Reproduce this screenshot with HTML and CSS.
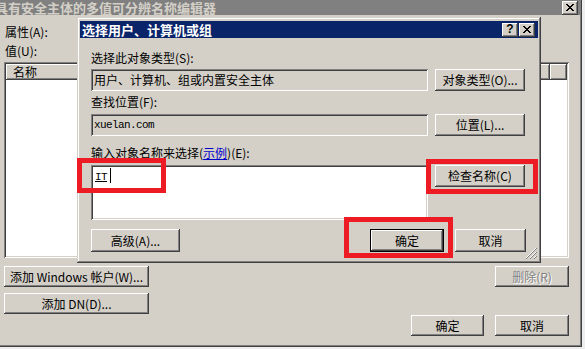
FILE: index.html
```html
<!DOCTYPE html>
<html lang="zh-CN">
<head>
    <meta charset="UTF-8">
    <title>选择用户、计算机或组</title>
    <link rel="stylesheet" href="styles.css">
</head>
<body>
    <div class="stage">

        <!-- the editor window behind -->
        <div class="outer">
            <div class="caption caption-off">
                <span class="caption-text">具有安全主体的多值可分辨名称编辑器</span>
                <span class="cap-btn">
                    <svg width="8" height="7" viewBox="0 0 8 7" shape-rendering="crispEdges"><g fill="#000"><rect x="0" y="0" width="2" height="1"/><rect x="6" y="0" width="2" height="1"/><rect x="1" y="1" width="2" height="1"/><rect x="5" y="1" width="2" height="1"/><rect x="2" y="2" width="4" height="1"/><rect x="3" y="3" width="2" height="1"/><rect x="2" y="4" width="4" height="1"/><rect x="1" y="5" width="2" height="1"/><rect x="5" y="5" width="2" height="1"/><rect x="0" y="6" width="2" height="1"/><rect x="6" y="6" width="2" height="1"/></g></svg>
                </span>
            </div>
            <div class="outer-body">
                <div class="label label-attr">属性(A):</div>
                <div class="label label-value">值(U):</div>
                <div class="list field">
                    <div class="list-head">
                        <div class="head-cell">名称</div>
                        <div class="head-cell head-fill"></div>
                    </div>
                </div>
                <div class="outer-foot">
                    <div class="foot-left">
                        <button class="btn btn-wide">添加 Windows 帐户(W)...</button>
                        <button class="btn btn-wide">添加 DN(D)...</button>
                    </div>
                    <div class="foot-right">
                        <button class="btn btn-remove" disabled>删除(R)</button>
                        <div class="foot-ok">
                            <button class="btn btn-ok">确定</button>
                            <button class="btn btn-cancel">取消</button>
                        </div>
                    </div>
                </div>
            </div>
        </div>

        <!-- picker dialog on top -->
        <div class="dialog">
            <div class="caption caption-on">
                <span class="caption-text">选择用户、计算机或组</span>
                <span class="cap-btns">
                    <span class="cap-btn cap-help">?</span>
                    <span class="cap-btn">
                        <svg width="8" height="7" viewBox="0 0 8 7" shape-rendering="crispEdges"><g fill="#000"><rect x="0" y="0" width="2" height="1"/><rect x="6" y="0" width="2" height="1"/><rect x="1" y="1" width="2" height="1"/><rect x="5" y="1" width="2" height="1"/><rect x="2" y="2" width="4" height="1"/><rect x="3" y="3" width="2" height="1"/><rect x="2" y="4" width="4" height="1"/><rect x="1" y="5" width="2" height="1"/><rect x="5" y="5" width="2" height="1"/><rect x="0" y="6" width="2" height="1"/><rect x="6" y="6" width="2" height="1"/></g></svg>
                    </span>
                </span>
            </div>
            <div class="dialog-body">
                <div class="label label-type">选择此对象类型(S):</div>
                <div class="row row-type">
                    <div class="field box readonly">用户、计算机、组或内置安全主体</div>
                    <button class="btn btn-side">对象类型(O)...</button>
                </div>
                <div class="label label-where">查找位置(F):</div>
                <div class="row row-where">
                    <div class="field box readonly mono">xuelan.com</div>
                    <button class="btn btn-side">位置(L)...</button>
                </div>
                <div class="label label-names">输入对象名称来选择(<a class="link" href="#">示例</a>)(E):</div>
                <div class="row row-names">
                    <div class="field box box-tall"><span class="mono resolved">IT</span><span class="caret"></span></div>
                    <button class="btn btn-side">检查名称(C)</button>
                </div>
                <div class="dialog-foot">
                    <button class="btn btn-advanced">高级(A)...</button>
                    <button class="btn btn-default">确定</button>
                    <button class="btn btn-dcancel">取消</button>
                </div>
            </div>
            <svg class="grip" width="12" height="12" viewBox="0 0 12 12">
                <g stroke-width="1">
                    <path d="M11 1 L1 11 M11 5 L5 11 M11 9 L9 11" stroke="#fff"/>
                    <path d="M12 1 L1 12 M12 5 L5 12 M12 9 L9 12" stroke="#808080"/>
                </g>
            </svg>
        </div>

        <!-- red highlight boxes -->
        <div class="mark mark-name"></div>
        <div class="mark mark-check"></div>
        <div class="mark mark-ok"></div>
    </div>
</body>
</html>
```

FILE: styles.css
```css
body {
    margin: 0;
    background: #eeeeee;
    font-family: "Noto Sans CJK SC", sans-serif;
    font-size: 12px;
    line-height: 12px;
    color: #000;
    overflow: hidden;
}

.stage {
    position: relative;
    width: 585px;
    height: 349px;
    overflow: hidden;
}

/* windows */
.outer {
    width: 582px;
    height: 347px;
    background: #d4d0c8;
    box-shadow: inset -1px -1px #404040, inset -2px -2px #808080;
    display: flex;
    flex-direction: column;
}

.dialog {
    position: absolute;
    left: 77px;
    top: 17px;
    width: 464px;
    height: 246px;
    background: #d4d0c8;
    box-shadow: inset -1px -1px #404040, inset 1px 1px #d4d0c8, inset -2px -2px #808080, inset 2px 2px #fff;
    display: flex;
    flex-direction: column;
}

.caption {
    display: flex;
    align-items: center;
    justify-content: space-between;
    font-weight: bold;
    font-size: 13px;
    line-height: 13px;
    flex-shrink: 0;
}

.caption-off {
    height: 15px;
    margin-right: 2px;
    background: #808080;
    color: #d4d0c8;
}

.caption-off .caption-text {
    margin-left: -5px;
    margin-top: -1px;
}

.caption-on {
    height: 17px;
    margin: 4px 3px 0 3px;
    padding: 0 3px 0 2px;
    background: #0a246a;
    color: #fff;
}

.cap-btns {
    display: flex;
    gap: 1px;
}

.cap-btn {
    width: 16px;
    height: 14px;
    display: flex;
    align-items: center;
    justify-content: center;
    background: #d4d0c8;
    box-shadow: inset -1px -1px #404040, inset 1px 1px #fff, inset -2px -2px #808080;
    color: #000;
}

.caption-off .cap-btn {
    margin-right: 2px;
}

.cap-help {
    font-family: "Liberation Sans", sans-serif;
    font-weight: bold;
    font-size: 12px;
}

/* controls */
.label {
    height: 12px;
    white-space: nowrap;
}

.btn {
    font-family: inherit;
    font-size: 12px;
    line-height: 12px;
    color: #000;
    background: #d4d0c8;
    border: none;
    padding: 0;
    height: 22px;
    box-shadow: inset -1px -1px #404040, inset 1px 1px #fff, inset -2px -2px #808080, inset 2px 2px #d4d0c8;
    white-space: nowrap;
}

.btn:disabled {
    color: #808080;
    text-shadow: 1px 1px #fff;
}

.field {
    box-shadow: inset 1px 1px #808080, inset -1px -1px #fff, inset 2px 2px #404040, inset -2px -2px #d4d0c8;
    background: #fff;
}

.readonly {
    background: #d4d0c8;
}

.mono {
    font-family: "Liberation Mono", monospace;
    font-size: 11px;
    letter-spacing: -0.6px;
}

.link {
    color: #0000cc;
    text-decoration: underline;
}

/* outer editor */
.outer-body {
    padding: 0 13px 0 4px;
    display: flex;
    flex-direction: column;
}

.label-attr {
    margin-top: 11px;
    margin-left: 1px;
}

.label-value {
    margin-top: 7px;
    margin-left: 1px;
}

.list {
    margin-top: 5px;
    height: 196px;
    padding: 2px;
    box-sizing: border-box;
}

.list-head {
    display: flex;
    height: 16px;
}

.head-cell {
    width: 544px;
    padding-left: 7px;
    box-sizing: border-box;
    display: flex;
    align-items: center;
    background: #d4d0c8;
    box-shadow: inset -1px -1px #404040, inset 1px 1px #fff, inset -2px -2px #808080;
}

.head-fill {
    flex: 1;
    width: auto;
}

.outer-foot {
    margin-top: 8px;
    height: 70px;
    display: flex;
    justify-content: space-between;
}

.foot-left {
    display: flex;
    flex-direction: column;
    gap: 6px;
}

.btn-wide {
    width: 145px;
    height: 21px;
}

.foot-right {
    display: flex;
    flex-direction: column;
    justify-content: space-between;
    align-items: flex-end;
}

.btn-remove {
    width: 74px;
    height: 21px;
}

.foot-ok {
    display: flex;
    gap: 11px;
}

.btn-ok {
    width: 73px;
    height: 21px;
}

.btn-cancel {
    width: 74px;
    height: 21px;
}

/* picker dialog */
.dialog-body {
    padding: 0 0 0 14px;
    display: flex;
    flex-direction: column;
}

.label-type {
    margin-top: 14px;
}

.label-where {
    margin-top: 5px;
}

.label-names {
    margin-top: 11px;
}

.row {
    display: flex;
    align-items: flex-start;
    gap: 7px;
}

.row-type {
    margin-top: 5px;
}

.row-where {
    margin-top: 6px;
}

.row-names {
    margin-top: 6px;
}

.box {
    width: 337px;
    height: 22px;
    padding: 0 3px;
    box-sizing: border-box;
    display: flex;
    align-items: center;
    white-space: nowrap;
}

.box-tall {
    height: 55px;
    align-items: flex-start;
    padding-top: 6px;
}

.resolved {
    text-decoration: underline;
    margin-left: 1px;
}

.caret {
    width: 1px;
    height: 15px;
    margin-top: -3px;
    margin-left: 3px;
    background: #000;
}

.btn-side {
    width: 90px;
}

.dialog-foot {
    margin-top: 9px;
    display: flex;
    padding-right: 15px;
}

.btn-advanced {
    width: 89px;
    height: 23px;
}

.btn-default {
    margin-left: auto;
    width: 74px;
    height: 23px;
    box-shadow: inset 0 0 0 1px #000, inset -2px -2px #404040, inset 2px 2px #fff, inset -3px -3px #808080;
}

.btn-dcancel {
    margin-left: 11px;
    width: 71px;
    height: 23px;
}

.grip {
    position: absolute;
    right: 4px;
    bottom: 4px;
}

/* red annotation boxes */
.mark {
    position: absolute;
    border: 5px solid #ed1c24;
    box-sizing: border-box;
}

.mark-name {
    left: 77px;
    top: 158px;
    width: 89px;
    height: 35px;
}

.mark-check {
    left: 426px;
    top: 159px;
    width: 112px;
    height: 35px;
}

.mark-ok {
    left: 344px;
    top: 217px;
    width: 109px;
    height: 41px;
}
```
